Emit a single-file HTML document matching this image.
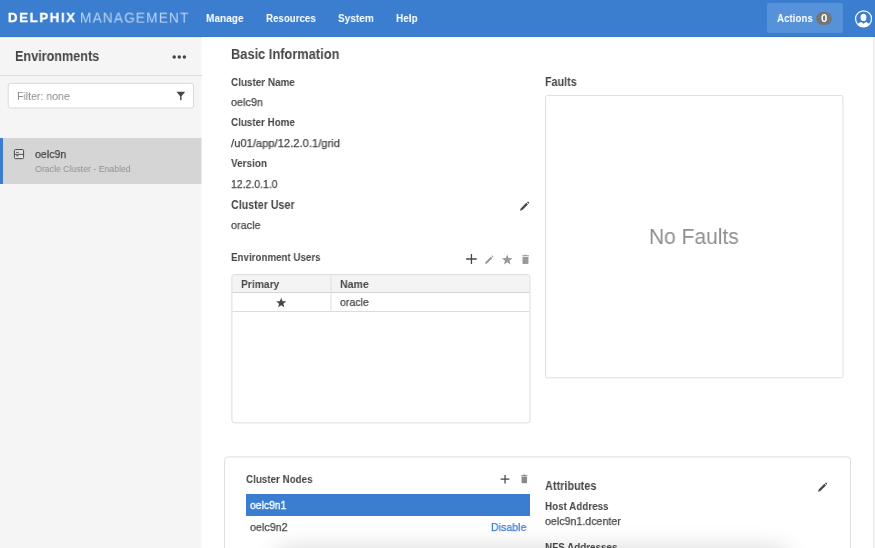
<!DOCTYPE html>
<html><head><meta charset="utf-8"><title>Delphix Management</title>
<style>
*{box-sizing:border-box;margin:0;padding:0}
html,body{width:875px;height:548px;overflow:hidden;background:#fff;font-family:"Liberation Sans",sans-serif;color:#464646}
.a{position:absolute}
.t{position:absolute;line-height:16px;white-space:nowrap;transform-origin:0 0;will-change:transform}
#hdr{position:absolute;left:0;top:0;width:875px;height:37px;background:#3b7ed0}
#side{position:absolute;left:0;top:37px;width:201px;height:511px;background:#f5f5f5;border-right:1px solid #fafafa;box-sizing:content-box}
</style></head><body>
<div id="hdr"></div><div class="a" style="left:0;top:36px;width:875px;height:1px;background:#3675c7"></div>
<div id="side"></div>
<!-- header -->
<div class="t" style="left:7.58px;top:10px;font-size:13.2px;font-weight:bold;color:#fff;transform:scaleX(0.9953);letter-spacing:1.7px;-webkit-text-stroke:0.3px #fff;">DELPHIX</div><div class="t" style="left:79.6px;top:11px;font-size:13.8px;font-weight:normal;color:#bdd4f0;transform:translateY(-0.4px) scaleX(0.9877);letter-spacing:1.2px;">MANAGEMENT</div><div class="t" style="left:205.78px;top:10px;font-size:11.4px;font-weight:bold;color:#fff;transform:scaleX(0.8888);">Manage</div><div class="t" style="left:265.5px;top:10px;font-size:11.4px;font-weight:bold;color:#fff;transform:scaleX(0.8536);">Resources</div><div class="t" style="left:337.71px;top:10px;font-size:11.4px;font-weight:bold;color:#fff;transform:scaleX(0.8817);">System</div><div class="t" style="left:396.12px;top:10px;font-size:11.4px;font-weight:bold;color:#fff;transform:scaleX(0.8767);">Help</div>
<div class="a" style="left:767px;top:3px;width:76px;height:30px;background:#5592da;border-radius:2px"></div>
<div class="t" style="left:777.16px;top:10px;font-size:11.4px;font-weight:bold;color:#fff;transform:scaleX(0.8575);">Actions</div>
<div class="a" style="left:816px;top:11.5px;width:15.5px;height:13px;border-radius:6.5px;background:#757575"></div>
<div class="t" style="left:821.14px;top:10px;font-size:11.4px;font-weight:bold;color:#fff;transform:scaleX(1.0);">0</div>
<svg class="a" style="left:854px;top:10px" width="19" height="19" viewBox="0 0 19 19"><clipPath id="uc"><circle cx="9.55" cy="8.8" r="8.1"/></clipPath><g clip-path="url(#uc)" fill="#fff"><ellipse cx="9.5" cy="7.4" rx="2.9" ry="3.65"/><path d="M2.6 15.6 Q4.6 12.6 6.7 11.9 Q7.6 12.2 9.5 13.7 Q11.4 12.2 12.3 11.9 Q14.4 12.6 16.4 15.6 V19 H2.6 Z"/></g><circle cx="9.55" cy="8.8" r="8.0" fill="none" stroke="#fff" stroke-width="1.2"/></svg>
<!-- sidebar -->
<div class="t" style="left:15.03px;top:48px;font-size:14.0px;font-weight:bold;color:#464646;transform:scaleX(0.9023);">Environments</div>
<svg class="a" style="left:171px;top:53px" width="17" height="8" viewBox="0 0 17 8"><circle cx="3.2" cy="3.9" r="1.75" fill="#464646"/><circle cx="8.3" cy="3.9" r="1.75" fill="#464646"/><circle cx="13.4" cy="3.9" r="1.75" fill="#464646"/></svg><div class="a" style="left:0;top:37px;width:202px;height:1px;background:#ebebeb"></div>
<div class="a" style="left:0;top:75px;width:202px;height:1px;background:#dedede"></div>
<svg class="a" style="left:0;top:76px" width="202" height="40" viewBox="0 76 202 40"><rect x="8.2" y="83.4" width="185.3" height="24.6" rx="2.5" fill="#fff" stroke="#dadada"/></svg>
<div class="t" style="left:16.76px;top:88px;font-size:11.4px;font-weight:normal;color:#8c8c8c;transform:scaleX(0.9247);">Filter: none</div>
<svg class="a" style="left:176px;top:91px" width="10" height="10" viewBox="0 0 10 10"><path d="M0.4 0.8 H9.2 L5.5 5.2 V9.2 H4.15 V5.2 Z" fill="#464646"/></svg>
<div class="a" style="left:0;top:138px;width:201px;height:46px;background:#d5d5d5;border-right:1px solid #eaeaea;box-sizing:content-box"></div>
<div class="a" style="left:0;top:138px;width:3px;height:46px;background:#3b7ed0"></div>
<svg class="a" style="left:13px;top:149px" width="12" height="11" viewBox="0 0 12 11"><rect x="1.4" y="0.55" width="9.2" height="9.1" rx="1.2" fill="rgba(255,255,255,0.35)" stroke="#484848" stroke-width="1"/><path d="M1.4 5.4 H10.6" stroke="#484848" stroke-width="0.9"/><path d="M3 3.4 H5.8 M3 6.75 H5.8" stroke="#555" stroke-width="0.9"/></svg>
<div class="t" style="left:34.9px;top:146px;font-size:11.4px;font-weight:normal;color:#464646;transform:scaleX(0.93);-webkit-text-stroke:0.25px #464646;">oelc9n</div><div class="t" style="left:34.8px;top:161px;font-size:9.3px;font-weight:normal;color:#919191;transform:scaleX(0.94);">Oracle Cluster - Enabled</div>
<!-- main -->
<div class="t" style="left:231.03px;top:46px;font-size:14.0px;font-weight:bold;color:#464646;transform:scaleX(0.9165);">Basic Information</div><div class="t" style="left:231.15px;top:74px;font-size:11.4px;font-weight:bold;color:#464646;transform:scaleX(0.8695);">Cluster Name</div><div class="t" style="left:231.35px;top:94px;font-size:11.4px;font-weight:normal;color:#464646;transform:scaleX(0.9503);-webkit-text-stroke:0.25px #464646;">oelc9n</div><div class="t" style="left:231.32px;top:114px;font-size:11.4px;font-weight:bold;color:#464646;transform:scaleX(0.8623);">Cluster Home</div><div class="t" style="left:231.31px;top:135px;font-size:11.4px;font-weight:normal;color:#464646;transform:scaleX(0.9831);-webkit-text-stroke:0.25px #464646;">/u01/app/12.2.0.1/grid</div><div class="t" style="left:230.84px;top:155px;font-size:11.4px;font-weight:bold;color:#464646;transform:scaleX(0.8743);">Version</div><div class="t" style="left:230.87px;top:176px;font-size:11.4px;font-weight:normal;color:#464646;transform:scaleX(0.9206);-webkit-text-stroke:0.25px #464646;">12.2.0.1.0</div><div class="t" style="left:231.3px;top:197px;font-size:12.0px;font-weight:bold;color:#464646;transform:scaleX(0.8906);">Cluster User</div><div class="t" style="left:231.19px;top:217px;font-size:11.4px;font-weight:normal;color:#464646;transform:scaleX(0.9483);-webkit-text-stroke:0.25px #464646;">oracle</div><div class="t" style="left:231.11px;top:249px;font-size:11.4px;font-weight:bold;color:#464646;transform:scaleX(0.8578);">Environment Users</div>
<div class="t" style="left:545.08px;top:74px;font-size:12.0px;font-weight:bold;color:#464646;transform:scaleX(0.8954);">Faults</div>
<div class="t" style="left:649.12px;top:229px;font-size:21.6px;font-weight:normal;color:#8f8f8f;transform:scaleX(0.9724);">No Faults</div>
<svg class="a" style="left:0;top:0" width="875" height="548" viewBox="0 0 875 548">
<rect x="545.5" y="95.5" width="297.5" height="282.35" rx="1.8" fill="none" stroke="#dfdfdf"/>
<path d="M232.4 292 V277.6 Q232.4 275.1 234.9 275.1 H527 Q529.5 275.1 529.5 277.6 V292 Z" fill="#f4f4f4"/>
<rect x="231.9" y="274.6" width="298.1" height="148.25" rx="2.5" fill="none" stroke="#dcdcdc"/>
<path d="M232.4 292.55 H529.5" stroke="#d4d4d4"/>
<path d="M232.4 311.5 H529.5" stroke="#dcdcdc"/>
<path d="M330.95 275.1 V311.5" stroke="#dedede"/>
<rect x="224.55" y="456.9" width="625.95" height="120" rx="3.5" fill="none" stroke="#dfdfdf"/>
</svg>
<!-- icons -->
<svg class="a" style="left:519px;top:201px" width="11" height="11" viewBox="0 0 11 11"><path d="M1 9.8 L1.7 7.5 L7.35 1.85 L8.95 3.45 L3.3 9.1 Z M8.0 1.2 L8.6 0.65 Q9 0.35 9.4 0.75 L9.95 1.3 Q10.35 1.7 10.05 2.15 L9.5 2.75 Z" fill="#464646"/></svg>
<svg class="a" style="left:464px;top:252px" width="16" height="16" viewBox="0 0 16 16"><path d="M2.10 6.35 H12.70 V7.65 H2.10 Z M6.80 2.00 H8.10 V12.00 H6.80 Z" fill="#464646"/></svg>
<svg class="a" style="left:484.2px;top:254.9px" width="10.2" height="10.2" viewBox="0 0 11 11"><path d="M1 9.8 L1.7 7.5 L7.35 1.85 L8.95 3.45 L3.3 9.1 Z M8.0 1.2 L8.6 0.65 Q9 0.35 9.4 0.75 L9.95 1.3 Q10.35 1.7 10.05 2.15 L9.5 2.75 Z" fill="#9a9a9a"/></svg>
<svg class="a" style="left:500px;top:253px" width="15" height="15" viewBox="0 0 15 15"><path d="M7.20 1.40 L8.58 5.10 L12.53 5.27 L9.44 7.73 L10.49 11.53 L7.20 9.35 L3.91 11.53 L4.96 7.73 L1.87 5.27 L5.82 5.10 Z" fill="#9a9a9a"/></svg>
<svg class="a" style="left:520.6px;top:253.9px" width="9" height="11" viewBox="0 0 8 10"><path d="M0.9 1.2 H2.8 L3.1 0.6 H4.9 L5.2 1.2 H7.1 V2.1 H0.9 Z M1.3 2.8 H6.7 V8.4 Q6.7 9.1 6 9.1 H2 Q1.3 9.1 1.3 8.4 Z" fill="#9a9a9a"/></svg>
<!-- table -->
<div class="t" style="left:241.1px;top:276px;font-size:11.4px;font-weight:bold;color:#464646;transform:scaleX(0.9029);">Primary</div><div class="t" style="left:339.84px;top:276px;font-size:11.4px;font-weight:bold;color:#464646;transform:scaleX(0.9264);">Name</div><div class="t" style="left:339.62px;top:294px;font-size:11.4px;font-weight:normal;color:#464646;transform:scaleX(0.9251);-webkit-text-stroke:0.25px #464646;">oracle</div>
<svg class="a" style="left:274px;top:296px" width="14" height="14" viewBox="0 0 14 14"><path d="M7.20 1.70 L8.51 5.20 L12.24 5.36 L9.32 7.69 L10.32 11.29 L7.20 9.23 L4.08 11.29 L5.08 7.69 L2.16 5.36 L5.89 5.20 Z" fill="#464646"/></svg>
<!-- bottom panel -->
<div class="t" style="left:245.8px;top:471px;font-size:11.4px;font-weight:bold;color:#464646;transform:scaleX(0.862);">Cluster Nodes</div>
<svg class="a" style="left:498px;top:472px" width="16" height="16" viewBox="0 0 16 16"><path d="M2.70 6.57 H11.40 V7.82 H2.70 Z M6.43 2.90 H7.68 V11.50 H6.43 Z" fill="#464646"/></svg>
<svg class="a" style="left:520.2px;top:473.9px" width="8.6" height="10.2" viewBox="0 0 8 10"><path d="M0.9 1.2 H2.8 L3.1 0.6 H4.9 L5.2 1.2 H7.1 V2.1 H0.9 Z M1.3 2.8 H6.7 V8.4 Q6.7 9.1 6 9.1 H2 Q1.3 9.1 1.3 8.4 Z" fill="#8a8a8a"/></svg>
<div class="a" style="left:246px;top:494px;width:284px;height:22px;background:#3b7ed0"></div>
<div class="t" style="left:249.91px;top:497px;font-size:11.4px;font-weight:normal;color:#fff;transform:scaleX(0.9104);-webkit-text-stroke:0.35px #fff;">oelc9n1</div><div class="t" style="left:249.56px;top:519px;font-size:11.4px;font-weight:normal;color:#464646;transform:scaleX(0.9425);-webkit-text-stroke:0.25px #464646;">oelc9n2</div><div class="t" style="left:490.74px;top:519px;font-size:11.4px;font-weight:normal;color:#3b7ed0;transform:scaleX(0.9315);-webkit-text-stroke:0.25px #3b7ed0;">Disable</div>
<div class="t" style="left:544.53px;top:478px;font-size:12.0px;font-weight:bold;color:#464646;transform:scaleX(0.9075);">Attributes</div>
<svg class="a" style="left:817px;top:481.5px" width="11" height="11" viewBox="0 0 11 11"><path d="M1 9.8 L1.7 7.5 L7.35 1.85 L8.95 3.45 L3.3 9.1 Z M8.0 1.2 L8.6 0.65 Q9 0.35 9.4 0.75 L9.95 1.3 Q10.35 1.7 10.05 2.15 L9.5 2.75 Z" fill="#464646"/></svg>
<div class="t" style="left:544.64px;top:498px;font-size:11.4px;font-weight:bold;color:#464646;transform:scaleX(0.8621);">Host Address</div><div class="t" style="left:544.56px;top:513px;font-size:11.4px;font-weight:normal;color:#464646;transform:scaleX(0.9349);-webkit-text-stroke:0.25px #464646;">oelc9n1.dcenter</div><div class="t" style="left:544.64px;top:539px;font-size:11.4px;font-weight:bold;color:#464646;transform:scaleX(0.8641);">NFS Addresses</div>
<!-- bottom soft shadow -->
<div class="a" style="left:282px;top:555px;width:500px;height:40px;border-radius:6px;box-shadow:0 0 24px 6px rgba(0,0,0,0.17)"></div>
<div class="a" style="left:873px;top:37px;width:2px;height:511px;background:#f7f7f7;border-left:1px solid #e9e9e9"></div>
</body></html>
